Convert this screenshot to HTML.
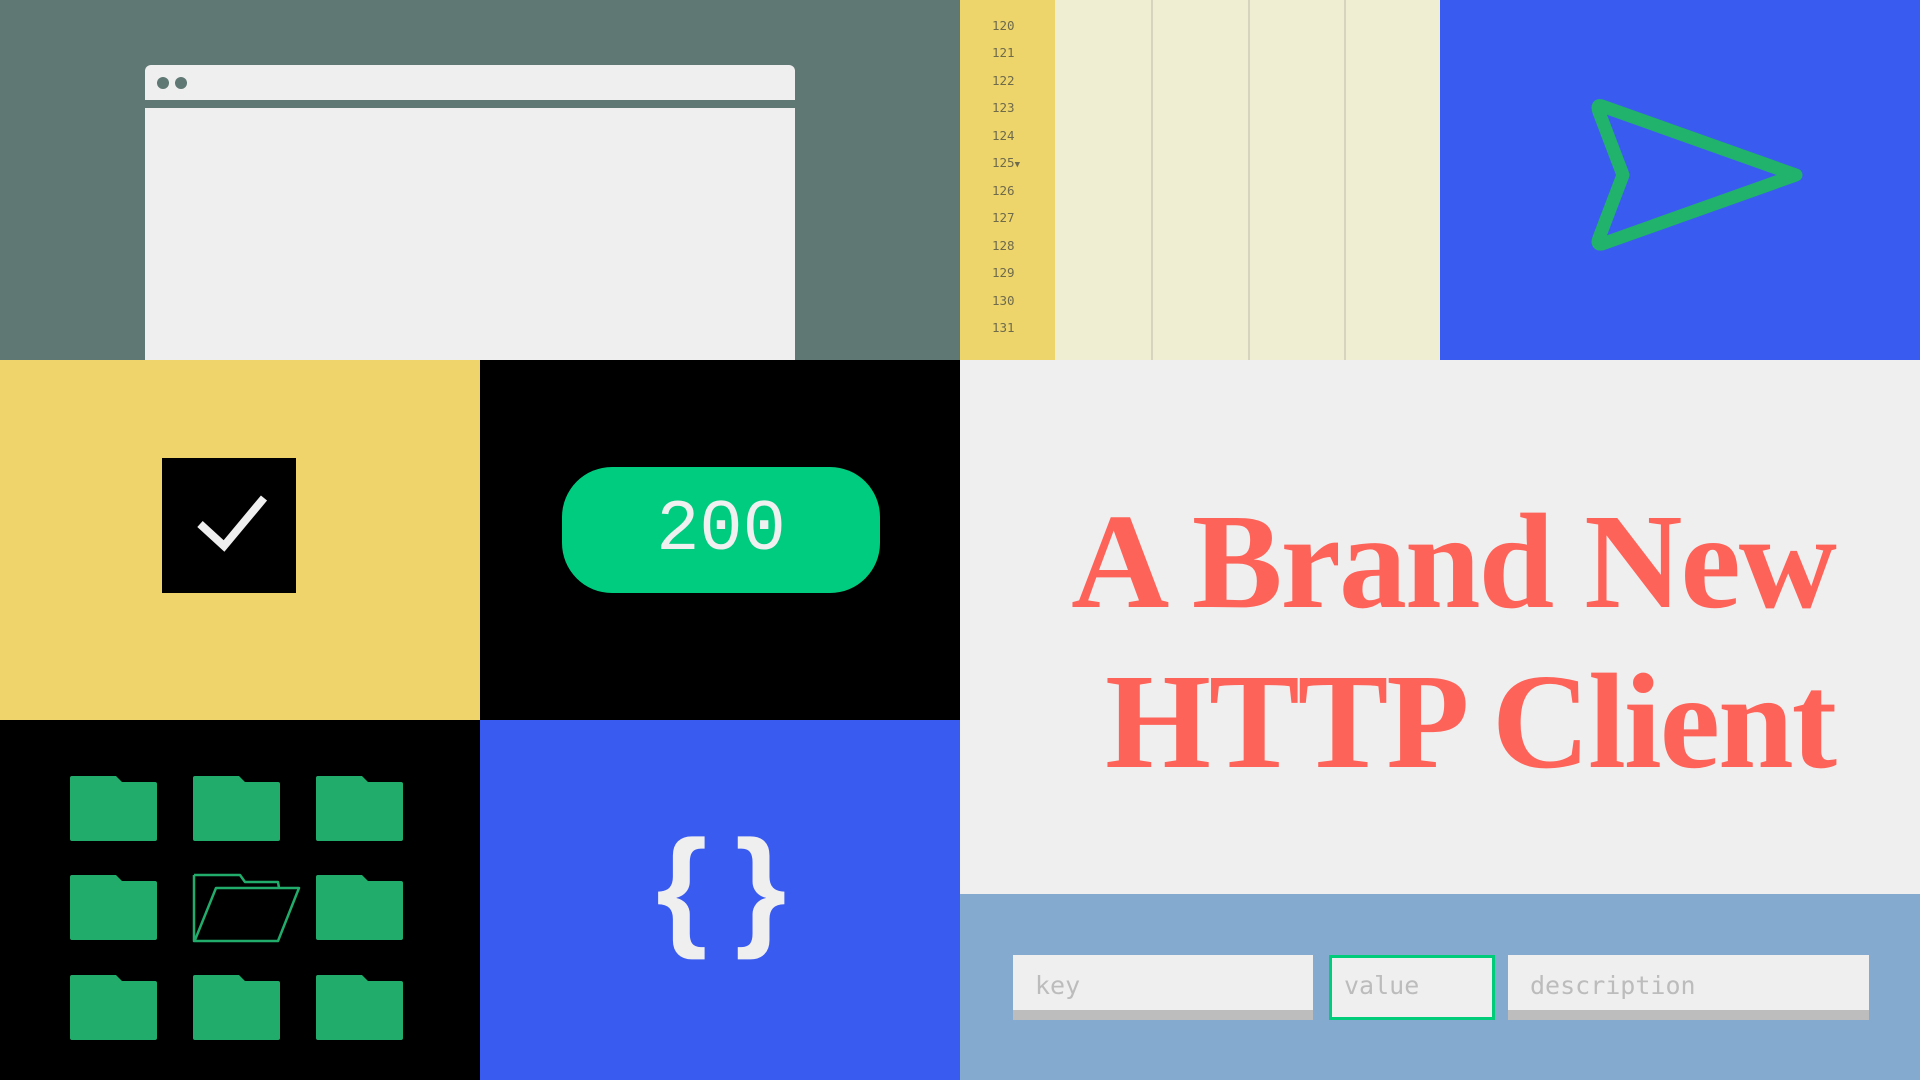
<!DOCTYPE html>
<html><head><meta charset="utf-8"><style>
*{margin:0;padding:0;box-sizing:border-box}
body{width:1920px;height:1080px;position:relative;overflow:hidden;background:#000;font-family:"Liberation Sans",sans-serif}
div{position:absolute}
.ln{left:992px;font:12.5px "DejaVu Sans Mono","Liberation Mono",monospace;color:#6e6a4c}
.vl{top:0;width:2px;height:360px;background:#d6d4bd}
.inp{background:#efefef;border-bottom:10px solid #bdbdbd;font:25px "DejaVu Sans Mono","Liberation Mono",monospace;color:#bcbcbc;padding:16px 0 0 22px}
.br{top:812px;font:bold 132px/150px "Liberation Sans",sans-serif;color:#efefef}
</style></head><body>
<div style="left:0;top:0;width:960px;height:360px;background:#5f7873"></div>
<div style="left:145px;top:65px;width:650px;height:35px;background:#efefef;border-radius:6px 6px 0 0"></div>
<div style="left:157px;top:77px;width:12px;height:12px;border-radius:50%;background:#5f7873"></div>
<div style="left:175px;top:77px;width:12px;height:12px;border-radius:50%;background:#5f7873"></div>
<div style="left:145px;top:108px;width:650px;height:252px;background:#efefef"></div>

<div style="left:960px;top:0;width:95px;height:360px;background:#eed56b"></div>
<div style="left:1055px;top:0;width:385px;height:360px;background:#f0eed2"></div>
<div class="vl" style="left:1151px"></div><div class="vl" style="left:1248px"></div><div class="vl" style="left:1344px"></div>
<div class="ln" style="top:18px">120</div><div class="ln" style="top:45px">121</div><div class="ln" style="top:73px">122</div><div class="ln" style="top:100px">123</div><div class="ln" style="top:128px">124</div><div class="ln" style="top:155px">125<span style="font-size:9px">▼</span></div><div class="ln" style="top:183px">126</div><div class="ln" style="top:210px">127</div><div class="ln" style="top:238px">128</div><div class="ln" style="top:265px">129</div><div class="ln" style="top:293px">130</div><div class="ln" style="top:320px">131</div>

<div style="left:1440px;top:0;width:480px;height:360px;background:#3a5bef"></div>
<svg style="position:absolute;left:1440px;top:0" width="480" height="360"><path d="M162 106 L356 175 L162 244 Q156 245 159 238 L183 175 L159 112 Q156 104 162 106 Z" fill="none" stroke="#21b36b" stroke-width="13" stroke-linejoin="round"/></svg>

<div style="left:0;top:360px;width:480px;height:360px;background:#efd46b"></div>
<div style="left:162px;top:458px;width:134px;height:135px;background:#000"></div>
<svg style="position:absolute;left:162px;top:458px" width="134" height="135"><path d="M38 66 L62 88 L102 40" fill="none" stroke="#efefef" stroke-width="8"/></svg>
<div style="left:480px;top:360px;width:480px;height:360px;background:#000"></div>
<div style="left:562px;top:467px;width:318px;height:126px;background:#00cc7f;border-radius:50px;color:#f0f0f0;font:72px 'Liberation Mono',monospace;text-align:center;line-height:126px">200</div>

<div style="left:960px;top:360px;width:960px;height:534px;background:#efefef"></div>
<div style="left:960px;top:482px;width:875px;text-align:right;font:bold 136px/160px 'Liberation Serif',serif;color:#fe6359;letter-spacing:-2px">A Brand New<br>HTTP Client</div>
<div style="left:960px;top:894px;width:960px;height:186px;background:#84aacf"></div>
<div class="inp" style="left:1013px;top:955px;width:300px;height:65px">key</div>
<div class="inp" style="left:1329px;top:955px;width:166px;height:65px;border:3px solid #00cc7a;padding:13px 0 0 12px">value</div>
<div class="inp" style="left:1508px;top:955px;width:361px;height:65px">description</div>

<div style="left:480px;top:720px;width:480px;height:360px;background:#3a5bef"></div>
<div class="br" style="left:656px">{</div>
<div class="br" style="left:735px">}</div>

<svg style="position:absolute;left:0;top:720px" width="480" height="360">
<defs><path id="f" d="M2 0 H46 L52 6 H85 Q87 6 87 8 V63 Q87 65 85 65 H2 Q0 65 0 63 V2 Q0 0 2 0Z" fill="#21ac6c"/></defs>
<use href="#f" x="70" y="56"/><use href="#f" x="193" y="56"/><use href="#f" x="316" y="56"/>
<use href="#f" x="70" y="155"/><use href="#f" x="316" y="155"/>
<use href="#f" x="70" y="255"/><use href="#f" x="193" y="255"/><use href="#f" x="316" y="255"/>
<path d="M194 155 H240 L245 162 H278 L279 168 M194 155 V221 H278 L299 168 H216 L195 220" fill="none" stroke="#21ac6c" stroke-width="2.5" stroke-linejoin="round"/>
</svg>
</body></html>
